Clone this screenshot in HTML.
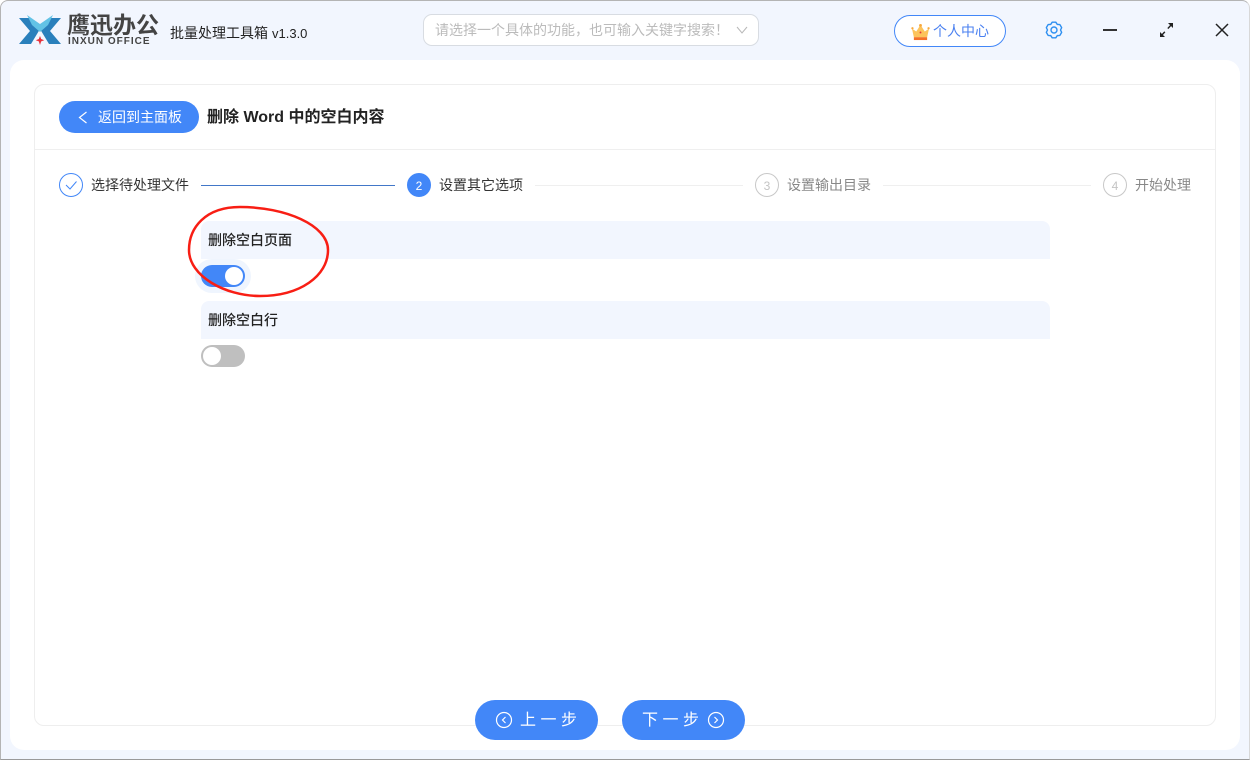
<!DOCTYPE html>
<html lang="zh"><head><meta charset="utf-8"><title>删除 Word 中的空白内容</title>
<style>
*{box-sizing:border-box;margin:0;padding:0}
html,body{width:1250px;height:760px;overflow:hidden;background:#fff}
body{font-family:"Liberation Sans","Noto Sans CJK SC",sans-serif;position:relative}
.a{position:absolute;white-space:nowrap}
#win{position:absolute;left:0;top:0;width:1250px;height:760px;background:#f2f6fe;border-top:1px solid #b4b4b4;border-left:1px solid #b4b4b4;border-radius:8px 8px 0 0;border-bottom:1px solid #9a9a9a;border-right:1px solid #d8d8d8}
.c{width:24px;height:24px;border-radius:50%;border:1px solid #c8c8c8;color:#c4c4c4;font-size:12px;line-height:24px;text-align:center}
.s{font-size:14px;line-height:20px}
.l{height:1px;background:#efefef}
.bar{left:201px;width:849px;height:38px;background:#f2f6fe;border-radius:8px 8px 0 0;font-size:14px;font-weight:500;line-height:38px;padding-left:7px;color:#222}
.btn{height:40px;background:#4287f8;border-radius:20px;color:#fff;font-size:16px;line-height:42px;top:700px;width:123px;letter-spacing:4.5px}
</style></head><body>
<div id="win"></div>
<svg class="a" style="left:18px;top:14px" width="44" height="32" viewBox="0 0 44 32"><path d="M1 4H13L22 15 13 30H1L12 17z" fill="#2a80bc"/><path d="M43 4H31L22 15 31 30H43L32 17z" fill="#2a80bc"/><path d="M9 1L22 10 35 1 30 11 22 18 14 11z" fill="#62c3e6"/><path d="M22 22l1.200 3 3 1.200-3 1.200-1.200 3.600-1.200-3.600-3-1.200 3-1.200z" fill="#e8323c"/></svg>
<div class="a" style="left:67px;top:10px;font-size:23px;line-height:30px;font-weight:700;color:#444">鹰迅办公</div>
<div class="a" style="left:68px;top:36px;font-size:10px;line-height:12px;font-weight:700;color:#444;letter-spacing:1px">INXUN OFFICE</div>
<div class="a" style="left:170px;top:23px;font-size:14px;line-height:20px;color:#222">批量处理工具箱<span style="font-size:13px;margin-left:4px">v1.3.0</span></div>
<div class="a" style="left:423px;top:14px;width:336px;height:32px;background:#fff;border:1px solid #d8dce2;border-radius:9px;font-size:14px;line-height:30px;color:#bbb;padding-left:11px">请选择一个具体的功能，也可输入关键字搜索！</div>
<svg class="a" style="left:735px;top:24px" width="14" height="12" viewBox="0 0 14 12"><path d="M2 3l5 6 5-6" fill="none" stroke="#b8b8b8" stroke-width="1"/></svg>
<div class="a" style="left:894px;top:15px;width:112px;height:32px;background:#fff;border:1px solid #4287f8;border-radius:16px"></div>
<svg class="a" style="left:911px;top:23px" width="19" height="18" viewBox="0 0 20 19"><path d="M1 6l4.500 3L10 2l4.500 7L19 6l-2 9H3z" fill="#fcc45c"/><circle cx="10" cy="2.500" r="1.500" fill="#f8a83c"/><circle cx="1.500" cy="5.500" r="1.200" fill="#f8a83c"/><circle cx="18.500" cy="5.500" r="1.200" fill="#f8a83c"/><rect x="3" y="15" width="14" height="3" fill="#f4722a"/><circle cx="10" cy="10" r="1" fill="#e8323c"/></svg>
<div class="a" style="left:933px;top:21px;font-size:14px;line-height:20px;color:#4a80f0">个人中心</div>
<svg class="a" style="left:1045px;top:21px" width="18" height="18" viewBox="0 0 18 18"><path d="M10.800 1.200H7.200L5.750 3.370 3.150 3.540 1.350 6.660 2.500 9 1.350 11.340 3.150 14.460 5.750 14.630 7.200 16.800H10.800L12.250 14.630 14.850 14.460 16.650 11.340 15.500 9 16.650 6.660 14.850 3.540 12.250 3.370z" fill="none" stroke="#2e8ff0" stroke-width="1.400" stroke-linejoin="round"/><circle cx="9" cy="9" r="3" fill="none" stroke="#2e8ff0" stroke-width="1.400"/></svg>
<svg class="a" style="left:1100px;top:20px" width="20" height="20"><path d="M3 10h14" stroke="#333" stroke-width="2"/></svg>
<svg class="a" style="left:1159px;top:22px" width="15" height="16" viewBox="0 0 15 16"><path d="M2 14L13 2" stroke="#222" stroke-width="1.400"/><path d="M9 1h5v5zM1 10v5h5z" fill="#222"/><path d="M6 10l3-3.300" stroke="#f2f6fe" stroke-width="2.500"/></svg>
<svg class="a" style="left:1214px;top:22px" width="16" height="16"><path d="M2 2l12 12M14 2L2 14" stroke="#222" stroke-width="1.500"/></svg>

<div class="a" style="left:10px;top:60px;width:1230px;height:690px;background:#fff;border-radius:14px"></div>
<div class="a" style="left:34px;top:84px;width:1182px;height:642px;border:1px solid #eeeeee;border-radius:10px"></div>
<div class="a l" style="left:35px;top:149px;width:1180px"></div>
<div class="a" style="left:59px;top:101px;width:140px;height:32px;background:#4287f8;border-radius:16px;color:#fff;font-size:14px;line-height:32px;padding-left:39px">返回到主面板</div>
<svg class="a" style="left:76px;top:109px" width="14" height="16"><path d="M10.500 3L3.500 8.500l7 5.500" fill="none" stroke="#fff" stroke-width="1.200"/></svg>
<div class="a" style="left:207px;top:107px;font-size:16px;line-height:22px;font-weight:700;color:#222">删除 Word 中的空白内容</div>

<svg class="a" style="left:59px;top:173px" width="24" height="24"><circle cx="12" cy="12" r="11.500" fill="none" stroke="#4287f8"/><path d="M7 12l4 4 6.500-7.500" fill="none" stroke="#4287f8"/></svg>
<div class="a s" style="left:91px;top:175px;color:#333">选择待处理文件</div>
<div class="a" style="left:201px;top:185px;width:194px;height:1px;background:#4277c8"></div>
<div class="a c" style="left:407px;top:173px;background:#4287f8;border-color:#4287f8;color:#fff">2</div>
<div class="a s" style="left:439px;top:175px;color:#333">设置其它选项</div>
<div class="a l" style="left:535px;top:185px;width:208px"></div>
<div class="a c" style="left:755px;top:173px">3</div>
<div class="a s" style="left:787px;top:175px;color:#888">设置输出目录</div>
<div class="a l" style="left:883px;top:185px;width:208px"></div>
<div class="a c" style="left:1103px;top:173px">4</div>
<div class="a s" style="left:1135px;top:175px;color:#888">开始处理</div>

<div class="a bar" style="top:221px">删除空白页面</div>
<div class="a" style="left:195px;top:259px;width:56px;height:34px;background:#eff5fe;border-radius:17px"></div>
<div class="a" style="left:201px;top:265px;width:44px;height:22px;background:#4287f8;border-radius:11px"></div>
<div class="a" style="left:225px;top:267px;width:18px;height:18px;background:#fff;border-radius:50%"></div>
<div class="a bar" style="top:301px">删除空白行</div>
<div class="a" style="left:201px;top:345px;width:44px;height:22px;background:#bfbfbf;border-radius:11px"></div>
<div class="a" style="left:203px;top:347px;width:18px;height:18px;background:#fff;border-radius:50%"></div>

<svg class="a" style="left:185px;top:202px" width="148" height="100"><path d="M55 5C20 5 4 26 4 48C4 74 40 94 75 94C115 94 143 74 143 48C143 23 100 5 55 5z" fill="none" stroke="#f81e14" stroke-width="2.500"/></svg>

<div class="a btn" style="left:475px;padding-left:45px">上一步</div>
<svg class="a" style="left:495px;top:711px" width="18" height="18"><circle cx="9" cy="9" r="7.500" fill="none" stroke="#fff" stroke-width="1.200"/><path d="M10.500 6L7.500 9l3 3" fill="none" stroke="#fff" stroke-width="1.200"/></svg>
<div class="a btn" style="left:622px;padding-left:20px">下一步</div>
<svg class="a" style="left:707px;top:711px" width="18" height="18"><circle cx="9" cy="9" r="7.500" fill="none" stroke="#fff" stroke-width="1.200"/><path d="M7.500 6l3 3-3 3" fill="none" stroke="#fff" stroke-width="1.200"/></svg>
</body></html>
